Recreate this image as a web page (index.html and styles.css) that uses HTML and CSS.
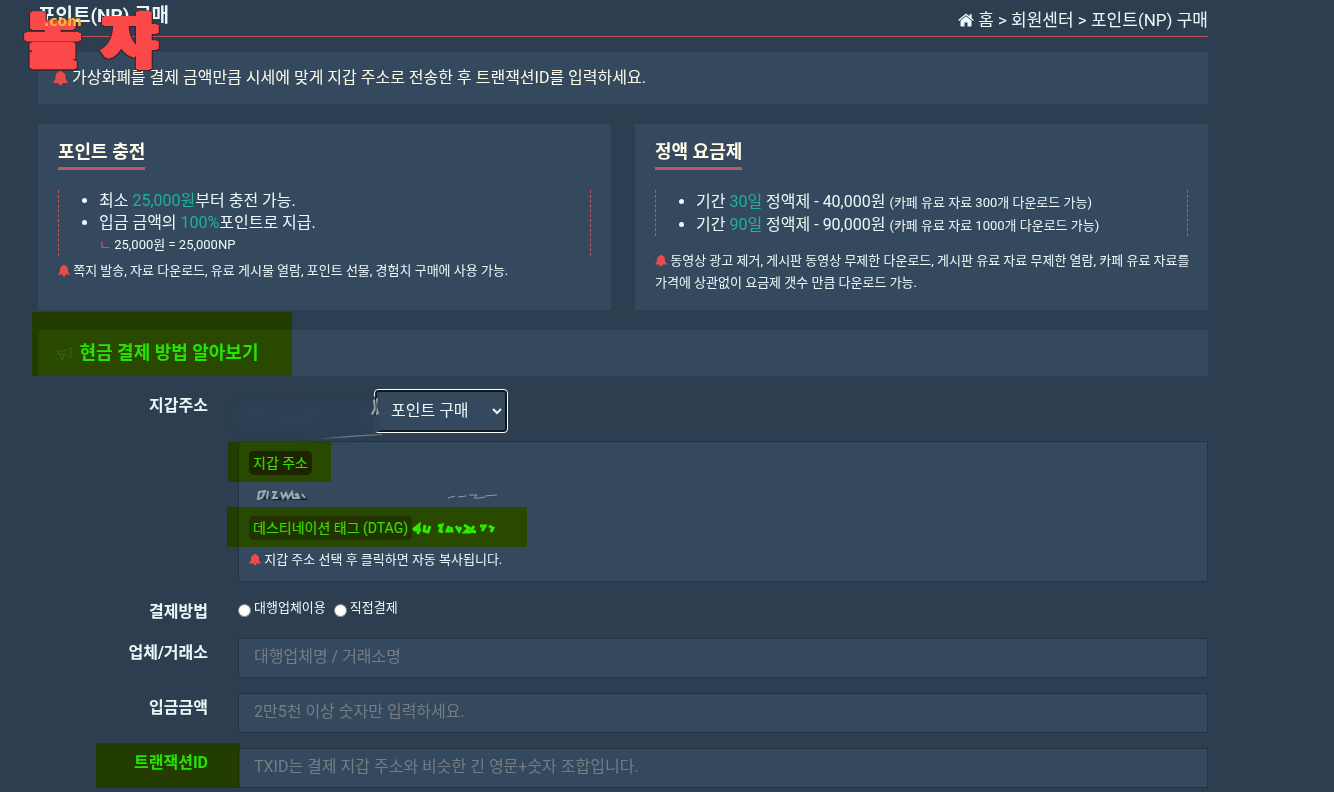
FILE: index.html
```html
<!DOCTYPE html>
<html lang="ko">
<head>
  <meta charset="UTF-8" />
  <meta name="viewport" content="width=device-width, initial-scale=1" />
  <title>포인트(NP) 구매</title>
  <link rel="stylesheet" href="styles.css">
</head>
<body>

  <!-- 아이콘 모음 -->
  <svg width="0" height="0" class="defs" aria-hidden="true">
    <symbol id="bell" viewBox="0 0 16 16">
      <path d="M8 .2c.8 0 1.300.5 1.300 1.200C11.900 2 13.300 4 13.300 6.500c0 3 .8 4.500 2.500 5.800v1H.2v-1C1.900 11 2.700 9.500 2.700 6.500 2.700 4 4.100 2 6.700 1.400 6.700.7 7.200.2 8 .2zM5.800 13h4.400c0 1.800-.9 2.800-2.200 2.800S5.800 14.800 5.800 13z"/>
    </symbol>
    <symbol id="home" viewBox="0 0 16 14">
      <path d="M8 3.200 13.500 7.800V13a.6.6 0 0 1-.6.6H9.500V9.500h-3v4.100H3.100a.6.6 0 0 1-.6-.6V7.800zM8 .4 11.500 3.300V1.200h2.200v4l2.200 1.800-.9 1L8 2.200 1 8 .1 7z"/>
    </symbol>
    <symbol id="horn" viewBox="0 0 18 16">
      <path d="M2 6h5c3 0 6-2 8-4v11c-2-2-5-4-8-4H2zM4 9l1 5h3L7 9M16 6v3" fill="none" stroke="currentColor" stroke-width="1"/>
    </symbol>
  </svg>

  <!-- 로고 -->
  <a href="#" class="logo">
    <span class="logo-com">.com</span>
    <span class="logo-name"><b>놀</b><b>쟈</b></span>
  </a>

  <div class="container">
    <header class="page-head">
      <h1>포인트(NP) 구매</h1>
      <nav>
        <svg class="icon-home"><use href="#home"/></svg>
        <a href="#">홈</a> &gt; <a href="#">회원센터</a> &gt; <a href="#">포인트(NP) 구매</a>
      </nav>
    </header>

    <p class="notice"><svg class="bell bell-big"><use href="#bell"/></svg> 가상화폐를 결제 금액만큼 시세에 맞게 지갑 주소로 전송한 후 트랜잭션ID를 입력하세요.</p>

    <div class="cards">
      <section class="card">
        <h2>포인트 충전</h2>
        <ul>
          <li>최소 <em>25,000원</em>부터 충전 가능.</li>
          <li>입금 금액의 <em>100%</em>포인트로 지급.
            <small class="sub"><i>ㄴ</i> 25,000원 = 25,000NP</small>
          </li>
        </ul>
        <p class="note"><svg class="bell"><use href="#bell"/></svg> 쪽지 발송, 자료 다운로드, 유료 게시물 열람, 포인트 선물, 경험치 구매에 사용 가능.</p>
      </section>
      <section class="card card-flat">
        <h2>정액 요금제</h2>
        <ul>
          <li>기간 <em>30일</em> 정액제 - 40,000원 <small>(카페 유료 자료 300개 다운로드 가능)</small></li>
          <li>기간 <em>90일</em> 정액제 - 90,000원 <small>(카페 유료 자료 1000개 다운로드 가능)</small></li>
        </ul>
        <p class="note"><svg class="bell"><use href="#bell"/></svg> 동영상 광고 제거, 게시판 동영상 무제한 다운로드, 게시판 유료 자료 무제한 열람, 카페 유료 자료를 가격에 상관없이 요금제 갯수 만큼 다운로드 가능.</p>
      </section>
    </div>

    <div class="guide">
      <a href="#"><svg class="icon-horn"><use href="#horn"/></svg> 현금 결제 방법 알아보기</a>
    </div>

    <form>
      <div class="row">
        <label class="name" for="kind">지갑주소</label>
        <div class="field">
          <div class="selects">
            <select id="kind">
              <option>포인트 구매</option>
              <option>정액 요금제</option>
            </select>
            <svg class="smear" viewBox="0 0 160 60" aria-hidden="true">
              <defs><filter id="soft" x="-20%" y="-50%" width="140%" height="200%"><feGaussianBlur stdDeviation="5"/></filter></defs>
              <path d="M15 18 120 20 148 18 150 44 110 50 60 42 15 38z" fill="#2e4156" filter="url(#soft)"/>
              <path d="M149 10l8 4-2 14 3 16-9 3z" fill="#31455a"/>
              <path d="M95 53Q125 49 158 48L158 49Q130 51 95 53z" fill="#66788b"/>
              <path d="M149 14l1 8-3 6 2 1 2-5 1 5 3-1-2-8 1-8z" fill="#9aa5aa"/>
              <path d="M152 8c-2 5 2 12-1 22" stroke="#18222d" stroke-width="1" fill="none"/>
            </svg>
          </div>
          <div class="wallet">
            <span class="tag tag-addr">지갑 주소</span>
            <div class="erased">
              <svg viewBox="0 0 260 16" aria-hidden="true">
                <path d="M11 11h10M24 12h13M40 11l18 1" stroke="#1d2935" stroke-width="3"/>
                <path d="M10 5l6-1-3 7-4 1zM19 4l-1 8M23 5l4 0-3 6 5 0M32 5l2 6 3-5 2 5 4-6 1 6 6 0-2-5M46 7l5 4M53 7l3 4" fill="none" stroke="#9ba8b0" stroke-width="2"/>
                <path d="M199 11l7-2M209 10l8-1M220 8l8 0-3 3 6 0M236 9l12-1M231 11l5-1" fill="none" stroke="#8e9ca9" stroke-width="1"/>
              </svg>
            </div>
            <div class="dtag">
              <span class="tag">데스티네이션 태그 (DTAG)</span>
              <svg viewBox="0 0 84 16" aria-hidden="true">
                <path d="M1 10l6-5-1 9M2 10h7M13 5l-1 6 4 1 2-6M26 6l4-1-2 6 3 1M37 6l-2 5 5 0-1-4M44 6l3 5 2-4M52 5l5 3-4 4 6 0M62 6l-3 5 5 1M68 6l5 0-3 5M77 6l4 2-2 4" fill="none" stroke="#3cf02a" stroke-width="3"/>
              </svg>
            </div>
            <p class="note"><svg class="bell"><use href="#bell"/></svg> 지갑 주소 선택 후 클릭하면 자동 복사됩니다.</p>
          </div>
        </div>
      </div>

      <div class="row">
        <span class="name">결제방법</span>
        <div class="field radios">
          <input type="radio" name="pay" id="agency"><label for="agency">대행업체이용</label>
          <input type="radio" name="pay" id="direct"><label for="direct">직접결제</label>
        </div>
      </div>

      <div class="row">
        <label class="name" for="exchange">업체/거래소</label>
        <input type="text" class="field" id="exchange" placeholder="대행업체명 / 거래소명">
      </div>

      <div class="row">
        <label class="name" for="amount">입금금액</label>
        <input type="text" class="field" id="amount" placeholder="2만5천 이상 숫자만 입력하세요.">
      </div>

      <div class="row">
        <label class="name name-txid" for="txid">트랜잭션ID</label>
        <input type="text" class="field" id="txid" placeholder="TXID는 결제 지갑 주소와 비슷한 긴 영문+숫자 조합입니다.">
      </div>
    </form>
  </div>

</body>
</html>
```
FILE: styles.css
```css
* {
  box-sizing: border-box;
}

body {
  margin: 0;
  background: #2c3e50;
  color: #ecf8f8;
  font-family: Roboto, "Noto Sans CJK KR", sans-serif;
  font-size: 16px;
  line-height: 22px;
  overflow-x: hidden;
}

h1, h2, p, ul {
  margin: 0;
}

a {
  color: inherit;
  text-decoration: none;
}

.defs {
  position: absolute;
}

.container {
  max-width: 1170px;
  margin: 0 38px;
}

/* 로고는 본문 위에 떠 있음 */
.logo {
  position: absolute;
  left: 14px;
  top: 13px;
  z-index: 5;
  width: 154px;
}

.logo-name {
  display: flex;
  justify-content: space-around;
  font-size: 60px;
  line-height: 60px;
  color: #fb4848;
  -webkit-text-stroke: 2px #fb4848;
  text-shadow: 3px 0 #fb4848, -3px 0 #fb4848;
  filter: drop-shadow(1px 0 #3a2530) drop-shadow(-1px 0 #3a2530) drop-shadow(0 1px #3a2530);
}

.logo-name b {
  font-weight: 900;
}

.logo-com {
  position: absolute;
  left: 30px;
  top: -2px;
  z-index: 1;
  font-family: "DejaVu Sans", sans-serif;
  font-weight: bold;
  font-size: 14px;
  line-height: 20px;
  color: #f5b53c;
}

.page-head {
  display: flex;
  justify-content: space-between;
  height: 37px;
  padding-top: 5px;
  border-bottom: 1px solid #b5525a;
}

.page-head h1 {
  font-size: 19px;
}

.page-head nav {
  padding-top: 4px;
  font-size: 17px;
}

.icon-home {
  width: 16px;
  height: 14px;
  fill: currentColor;
  vertical-align: -1px;
}

.bell {
  width: 12px;
  height: 13px;
  fill: #e74c4c;
  vertical-align: -2px;
}

.bell-big {
  width: 15px;
  height: 16px;
  vertical-align: -3px;
}

.notice {
  margin-top: 15px;
  padding: 15px;
  background: #34495e;
  color: #fbfbe8;
}

.cards {
  display: flex;
  gap: 24px;
  margin: 20px 0;
}

.card {
  flex: 1;
  padding: 16px 20px;
  background: #34495e;
}

.card h2 {
  width: max-content;
  padding-bottom: 3px;
  border-bottom: 3px solid #c4575d;
  color: #fffbe6;
  font-size: 18px;
  line-height: 24px;
}

.card ul {
  margin: 20px 0 4px;
  padding-left: 40px;
  border-left: 1px dashed #c4575d;
  border-right: 1px dashed #c4575d;
}

.card-flat ul {
  margin-bottom: 14px;
}

.card-flat li {
  line-height: 23px;
}

.card-flat .note {
  margin-right: -5px;
}

.card em {
  color: #1fb299;
  font-style: normal;
}

small {
  font-size: 13px;
  line-height: 16px;
}

.sub {
  display: block;
  line-height: 22px;
}

.sub i {
  color: #e74c4c;
  font-style: normal;
}

.note {
  font-size: 13px;
}

.guide {
  padding: 11px 17px;
  background: #34495e;
}

.guide a {
  position: relative;
  color: #2fe92c;
  font-size: 18px;
  line-height: 24px;
  font-weight: bold;
}

.icon-horn {
  width: 20px;
  height: 16px;
  color: #4b6b50;
  vertical-align: -2px;
}

/* 형광펜 강조 */
.guide a::after,
.tag-addr::after,
.dtag::after,
.name-txid::after {
  content: "";
  position: absolute;
  background: #c8fa00;
  mix-blend-mode: multiply;
  pointer-events: none;
}

.guide a::after {
  inset: -30px -33px -13px -23px;
}

.tag-addr::after {
  inset: -9px -19px -7px -21px;
}

.dtag::after {
  inset: -9px -31px -7px -22px;
}

.name-txid::after {
  inset: -5px -32px -4px 58px;
}

.row {
  display: grid;
  grid-template-columns: 170px 1fr;
  gap: 30px;
  margin-top: 15px;
}

.name {
  position: relative;
  padding-top: 3px;
  font-weight: bold;
  line-height: 23px;
  text-align: right;
}

.name-txid {
  color: #2fe92c;
}

.field {
  min-width: 0;
}

.selects {
  display: flex;
  padding-left: 138px;
  position: relative;
}

.smear {
  position: absolute;
  left: -14px;
  top: -5px;
  width: 160px;
  height: 60px;
  pointer-events: none;
}

select {
  width: 130px;
  height: 40px;
  padding: 0 10px 2px;
  border: 1px solid #10161d;
  border-radius: 2px;
  outline: 1px solid #fff;
  outline-offset: 1px;
  box-shadow: 0 0 0 1px #10161d;
  background: #34495e;
  color: inherit;
  font: inherit;
}

.wallet {
  margin-top: 10px;
  padding: 9px 10px 10px;
  border: 1px solid #263442;
  background: #34495e;
}

.tag {
  display: block;
  position: relative;
  width: max-content;
  padding: 0 4px;
  border-radius: 5px;
  background: #24252c;
  color: #4ce63c;
  font-size: 14px;
  line-height: 24px;
}

.erased {
  height: 41px;
  padding-top: 12px;
}

.erased svg {
  display: block;
  width: 260px;
  height: 16px;
}

.dtag {
  display: flex;
  align-items: center;
  position: relative;
  width: max-content;
  margin-bottom: 9px;
}

.dtag .tag {
  background: #2a343c;
}

.dtag svg {
  width: 84px;
  height: 16px;
}

.radios {
  display: flex;
  height: 26px;
  font-size: 13px;
}

.radios input {
  width: 13px;
  height: 13px;
  margin: 7px 3px 0 0;
}

.radios label {
  margin-right: 8px;
}

input.field {
  height: 40px;
  padding: 0 15px 3px;
  border: 1px solid #263442;
  background: #34495e;
  color: inherit;
  font: inherit;
}

input::placeholder {
  color: #757d84;
}

@media (max-width: 700px) {
  .cards {
    flex-direction: column;
  }
}
```
